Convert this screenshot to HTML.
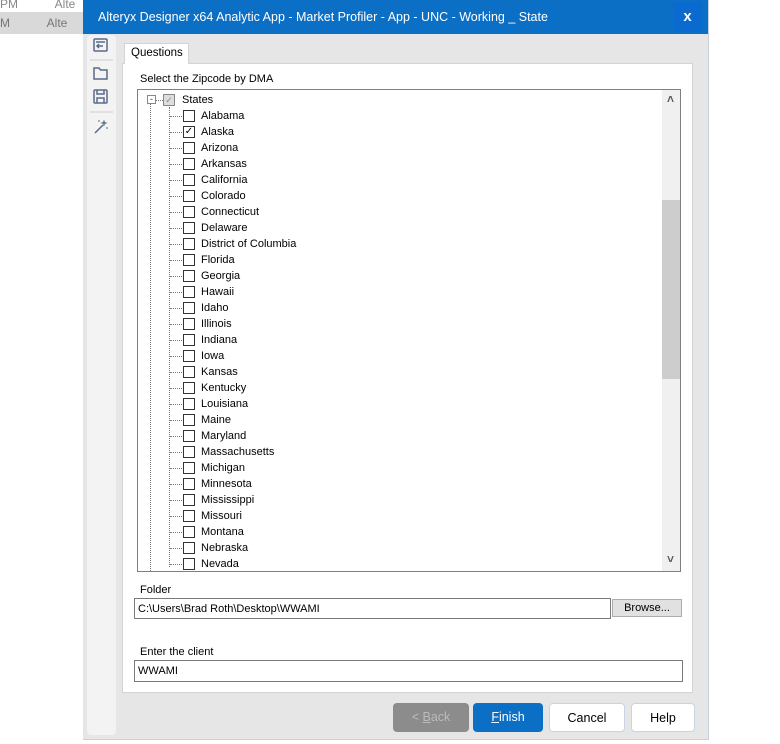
<!DOCTYPE html>
<html><head><style>
*{margin:0;padding:0;box-sizing:border-box}
body{width:780px;height:744px;background:#fff;font-family:"Liberation Sans",sans-serif;font-size:11px;color:#000;position:relative;overflow:hidden}
.a{position:absolute}
.cb{position:absolute;width:12px;height:12px;border:1px solid #333;background:#fff}
.btn{position:absolute;top:703px;height:29px;border-radius:4px;text-align:center;line-height:28px;font-size:12.5px}
</style></head><body>
<div class="a" style="left:0;top:0;width:83px;height:12px;color:#888;font-size:12px;line-height:8px">PM&nbsp;&nbsp;&nbsp;&nbsp;&nbsp;&nbsp;&nbsp;&nbsp;&nbsp;&nbsp;&nbsp;Alte</div>
<div class="a" style="left:0;top:12px;width:83px;height:22px;background:#d9d9d9;color:#777;font-size:12px;line-height:22px">M&nbsp;&nbsp;&nbsp;&nbsp;&nbsp;&nbsp;&nbsp;&nbsp;&nbsp;&nbsp;&nbsp;Alte</div>

<div class="a" style="left:83px;top:0;width:626px;height:740px;background:#e6e6e6;border-right:1px solid #c8d0dc;border-bottom:1px solid #c8d0dc"></div>
<div class="a" style="left:83px;top:0;width:625px;height:34px;background:#0b6fc6;color:#fff;font-size:12.5px;line-height:34px;padding-left:15px">Alteryx Designer x64 Analytic App - Market Profiler - App - UNC - Working _ State</div>
<div class="a" style="left:673px;top:2px;width:29px;height:30px;background:#0a6ad0;color:#fff;font-weight:bold;font-size:15px;text-align:center;line-height:29px">x</div>

<div class="a" style="left:87px;top:35px;width:29px;height:700px;background:#f3f3f3;border-radius:4px"></div>
<svg class="a" style="left:87px;top:35px" width="29" height="110" fill="none" stroke="#5b6b8a" stroke-width="1.5">
<rect x="7" y="4" width="13" height="12" rx="1"/><path d="M9 7h9M16 11h-6M12 9l-2 2 2 2"/>
<line x1="3" y1="25" x2="26" y2="25" stroke="#ccc" stroke-width="1"/>
<path d="M7 33h5l1.5 2H20v9H7z"/>
<rect x="7" y="55" width="13" height="13" rx="1"/><path d="M10 55v4h7v-4M10 68v-5h7v5"/>
<line x1="3" y1="77" x2="26" y2="77" stroke="#ccc" stroke-width="1"/>
<path d="M8 98l8-8"/><path d="M17 86l.5 1.5 1.5.5-1.5.5-.5 1.5-.5-1.5-1.5-.5 1.5-.5zM12 85v2M20 92v2" stroke-width="1"/>
</svg>

<div class="a" style="left:124px;top:43px;width:65px;height:21px;background:#fff;border:1px solid #d4d4d4;border-bottom:none;font-size:11.5px;line-height:19px;padding-left:6px;z-index:2">Questions</div>
<div class="a" style="left:122px;top:63px;width:571px;height:630px;background:#fff;border:1px solid #d4d4d4"></div>
<div class="a" style="left:140px;top:73px;font-size:11px">Select the Zipcode by DMA</div>

<div class="a" style="left:137px;top:89px;width:544px;height:483px;border:1px solid #808080;background:#fff;overflow:hidden">
<div class="a" style="left:524px;top:0;width:18px;height:481px;background:#f0f0f0"></div>
<div class="a" style="left:524px;top:110px;width:18px;height:179px;background:#cdcdcd"></div>
<div class="a" style="left:529px;top:2px;color:#555;font-size:12px;font-weight:bold">&#708;</div>
<div class="a" style="left:529px;top:462px;color:#555;font-size:12px;font-weight:bold">&#709;</div>
<div class="a" style="left:12px;top:13px;height:470px;border-left:1px dotted #777"></div>
<div class="a" style="left:31px;top:17px;height:460px;border-left:1px dotted #777"></div>
<div class="a" style="left:9px;top:5px;width:9px;height:9px;border:1px solid #888;background:#fff;font-size:9px;line-height:6px;text-align:center;color:#333">-</div>
<div class="a" style="left:18px;top:10px;width:7px;border-top:1px dotted #777"></div>
<div class="cb" style="left:25px;top:4px;border-color:#888;background:#ddd;font-size:9px;line-height:10px;text-align:center;color:#888">&#10003;</div>
<div class="a" style="left:44px;top:2px;line-height:16px">States</div>
<div id="t"></div>
</div>
<script>
var s=["Alabama","Alaska","Arizona","Arkansas","California","Colorado","Connecticut","Delaware","District of Columbia","Florida","Georgia","Hawaii","Idaho","Illinois","Indiana","Iowa","Kansas","Kentucky","Louisiana","Maine","Maryland","Massachusetts","Michigan","Minnesota","Mississippi","Missouri","Montana","Nebraska","Nevada"],h="";
for(var i=0;i<s.length;i++){var y=18+i*16;
h+='<div class="a" style="left:32px;top:'+(y+8)+'px;width:12px;border-top:1px dotted #777"></div>';
h+='<div class="cb" style="left:45px;top:'+(y+2)+'px;font-size:10px;line-height:10px;text-align:center">'+(i==1?'&#10003;':'')+'</div>';
h+='<div class="a" style="left:63px;top:'+y+'px;line-height:16px">'+s[i]+'</div>';}
document.getElementById('t').innerHTML=h;
</script>

<div class="a" style="left:140px;top:584px">Folder</div>
<div class="a" style="left:134px;top:598px;width:477px;height:21px;border:1px solid #7a7a7a;background:#fff;padding-left:3px;line-height:20px">C:\Users\Brad Roth\Desktop\WWAMI</div>
<div class="a" style="left:612px;top:599px;width:70px;height:18px;border:1px solid #adadad;background:#e1e1e1;text-align:center;line-height:17px">Browse...</div>
<div class="a" style="left:140px;top:646px">Enter the client</div>
<div class="a" style="left:134px;top:660px;width:549px;height:22px;border:1px solid #7a7a7a;background:#fff;padding-left:3px;line-height:21px">WWAMI</div>

<div class="btn" style="left:393px;width:76px;background:#8c8c8c;color:#bbb">&lt; <u>B</u>ack</div>
<div class="btn" style="left:473px;width:70px;background:#0b6fc6;color:#fff"><u>F</u>inish</div>
<div class="btn" style="left:549px;width:76px;background:#fff;border:1px solid #c8d4e6">Cancel</div>
<div class="btn" style="left:631px;width:64px;background:#fff;border:1px solid #c8d4e6">Help</div>
</body></html>
